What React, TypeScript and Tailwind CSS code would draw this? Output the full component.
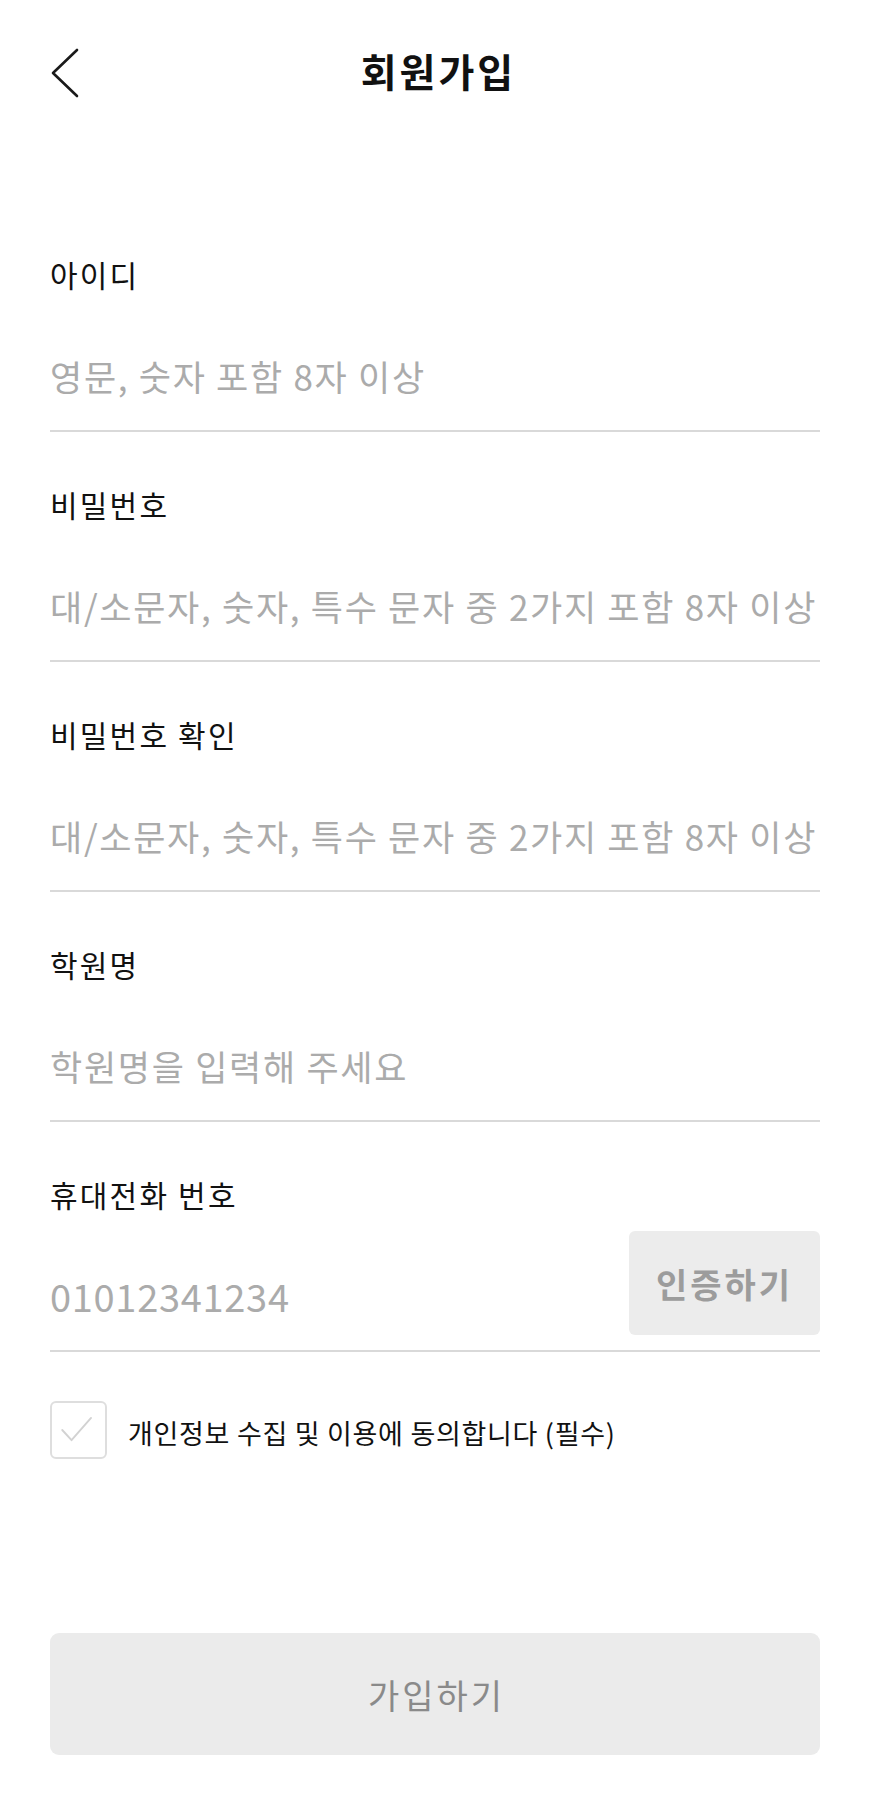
import React from "react";

const FONT = { fontFamily: '"Noto Sans CJK KR", "Noto Sans", sans-serif' };

function Field({
  label,
  placeholder,
  first,
  big,
  action,
}: {
  label: string;
  placeholder: string;
  first?: boolean;
  big?: boolean;
  action?: string;
}) {
  return (
    <div className={first ? "pt-[119px]" : "pt-[57px]"}>
      <div className="text-[30px] leading-[30px] tracking-[2.2px] text-[#111111] whitespace-nowrap">{label}</div>
      <div className="mt-[22px] h-[104px] flex items-center justify-between">
        <div
          className={
            "pt-[25px] whitespace-nowrap text-[#ababab] " +
            (big
              ? "text-[38px] leading-[40px] tracking-[0.7px]"
              : "text-[35px] leading-[40px] tracking-[1.7px]")
          }
        >
          {placeholder}
        </div>
        {action ? (
          <button className="w-[191px] h-[104px] rounded-[6px] bg-[#ececec] text-[#9c9c9c] text-[34px] tracking-[3px] font-bold flex items-center justify-center">
            {action}
          </button>
        ) : null}
      </div>
      <div className="mt-[15px] h-[2px] bg-[#d9d9d9]" />
    </div>
  );
}

export default function App() {
  return (
    <div className="min-h-[1800px] bg-white pl-[50px] pr-[54px]" style={FONT}>
      <div className="h-[140px] grid grid-cols-[1fr_auto_1fr] items-center -ml-[50px] -mr-[54px]">
        <div className="pl-[50px] flex items-center">
          <svg width="30" height="50" viewBox="0 0 30 50" className="mt-[6px]">
            <path d="M27 2 L3 25 L27 48" fill="none" stroke="#1a1a1a" strokeWidth="2.6" strokeLinecap="round" strokeLinejoin="round" />
          </svg>
        </div>
        <div className="pl-[3px] text-[39px] leading-[40px] tracking-[3px] font-bold text-[#111111] whitespace-nowrap">회원가입</div>
        <div />
      </div>

      <Field first label="아이디" placeholder="영문, 숫자 포함 8자 이상" />
      <Field label="비밀번호" placeholder="대/소문자, 숫자, 특수 문자 중 2가지 포함 8자 이상" />
      <Field label="비밀번호 확인" placeholder="대/소문자, 숫자, 특수 문자 중 2가지 포함 8자 이상" />
      <Field label="학원명" placeholder="학원명을 입력해 주세요" />
      <Field label="휴대전화 번호" placeholder="01012341234" big action="인증하기" />

      <div className="mt-[49px] flex items-center gap-[21px]">
        <div className="w-[57px] h-[58px] rounded-[6px] border-2 border-[#dedede] flex items-center justify-center">
          <svg width="57" height="58" viewBox="0 0 57 58">
            <path d="M11 29 L21 40 L42 16" fill="none" stroke="#d2d2d2" strokeWidth="2" strokeLinecap="round" strokeLinejoin="round" />
          </svg>
        </div>
        <div className="pt-[5px] text-[27px] leading-[30px] tracking-[0.7px] text-[#111111] whitespace-nowrap">
          개인정보 수집 및 이용에 동의합니다 (필수)
        </div>
      </div>

      <button className="mt-[174px] w-full h-[122px] rounded-[9px] bg-[#ebebeb] text-[#8a8a8a] text-[34px] tracking-[3px] pl-[3px] flex items-center justify-center">
        가입하기
      </button>
    </div>
  );
}
